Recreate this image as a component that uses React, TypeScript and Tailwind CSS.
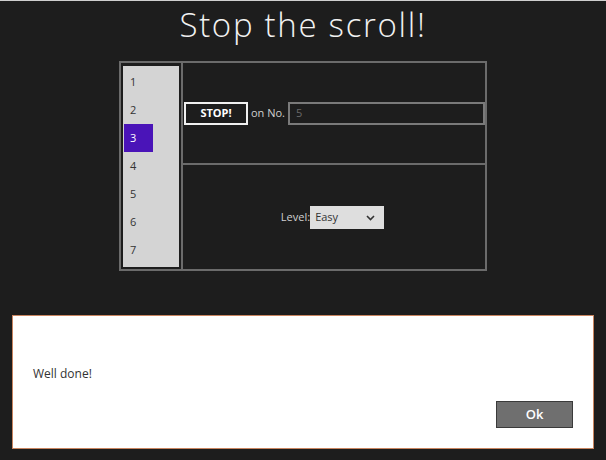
const ITEMS = [1, 2, 3, 4, 5, 6, 7];
const SELECTED = 3;

const font = { fontFamily: '"Open Sans", "Noto Sans", sans-serif' };

function Chevron() {
  return (
    <svg width="9" height="6" viewBox="0 0 9 6" className="text-[#333]">
      <path d="M1 1 L4.5 4.5 L8 1" fill="none" stroke="currentColor" strokeWidth="1.6" />
    </svg>
  );
}

export default function App() {
  return (
    <div
      className="w-[606px] h-[460px] bg-[#1d1d1d] border-t border-[#cfcfcf] overflow-hidden"
      style={font}
    >
      {/* title */}
      <h1 className="h-[60px] pt-[4px] text-center text-[33px] tracking-[1.7px] font-light text-[#f2f2f2] leading-[40px]">
        Stop the scroll!
      </h1>

      {/* main box */}
      <div className="mx-auto w-[368px] h-[210px] border-2 border-[#6b6b6b] flex">
        {/* list column */}
        <div className="w-[62px] h-full border-r-2 border-[#6b6b6b] px-[2px] pt-[3px] pb-[2px]">
          <div className="h-full bg-[#d4d4d4] pt-[2px] flex flex-col">
            {ITEMS.map((n) => {
              const active = n === SELECTED;
              return (
                <div
                  key={n}
                  className={
                    active
                      ? "w-[29px] h-[28px] ml-[1px] pl-[6px] flex items-center text-[11px] bg-[#4a14b8] text-white"
                      : "w-[29px] h-[28px] ml-[1px] pl-[6px] flex items-center text-[11px] text-[#333]"
                  }
                >
                  {n}
                </div>
              );
            })}
          </div>
        </div>

        {/* right side */}
        <div className="flex-1 flex flex-col">
          <div className="h-[102px] border-b-2 border-[#6b6b6b] flex items-center pl-[1px] pt-[1px]">
            <button
              type="button"
              className="w-[64px] h-[23px] shrink-0 border-2 border-[#f0f0f0] text-[11px] font-bold text-white flex items-center justify-center"
            >
              STOP!
            </button>
            <span className="ml-[3px] whitespace-nowrap text-[11px] text-[#d0d0d0]">on No.</span>
            <div className="ml-[3px] flex-1 min-w-0 h-[23px] border-2 border-[#7a7a7a] flex items-center pl-[6px] text-[11px] text-[#6a6a6a]">
              5
            </div>
          </div>
          <div className="flex-1 flex items-center justify-center pt-[1px] pr-[3px]">
            <span className="text-[11px] text-[#d0d0d0]">Level:</span>
            <div className="w-[74px] h-[23px] bg-[#dedede] flex items-center justify-between pl-[5px] pr-[9px] text-[11px] text-[#333]">
              <span>Easy</span>
              <Chevron />
            </div>
          </div>
        </div>
      </div>

      {/* dialog */}
      <div className="mt-[44px] mx-[12px] h-[134px] bg-white border border-[#c8845f] flex flex-col pl-[20px] pr-[20px]">
        <p className="mt-[49px] text-[12px] text-[#333]">Well done!</p>
        <div className="mt-auto mb-[20px] flex justify-end">
          <button
            type="button"
            className="w-[77px] h-[27px] bg-[#6f6f6f] border border-[#3a3a3a] text-[13px] font-semibold text-white"
          >
            Ok
          </button>
        </div>
      </div>
    </div>
  );
}
